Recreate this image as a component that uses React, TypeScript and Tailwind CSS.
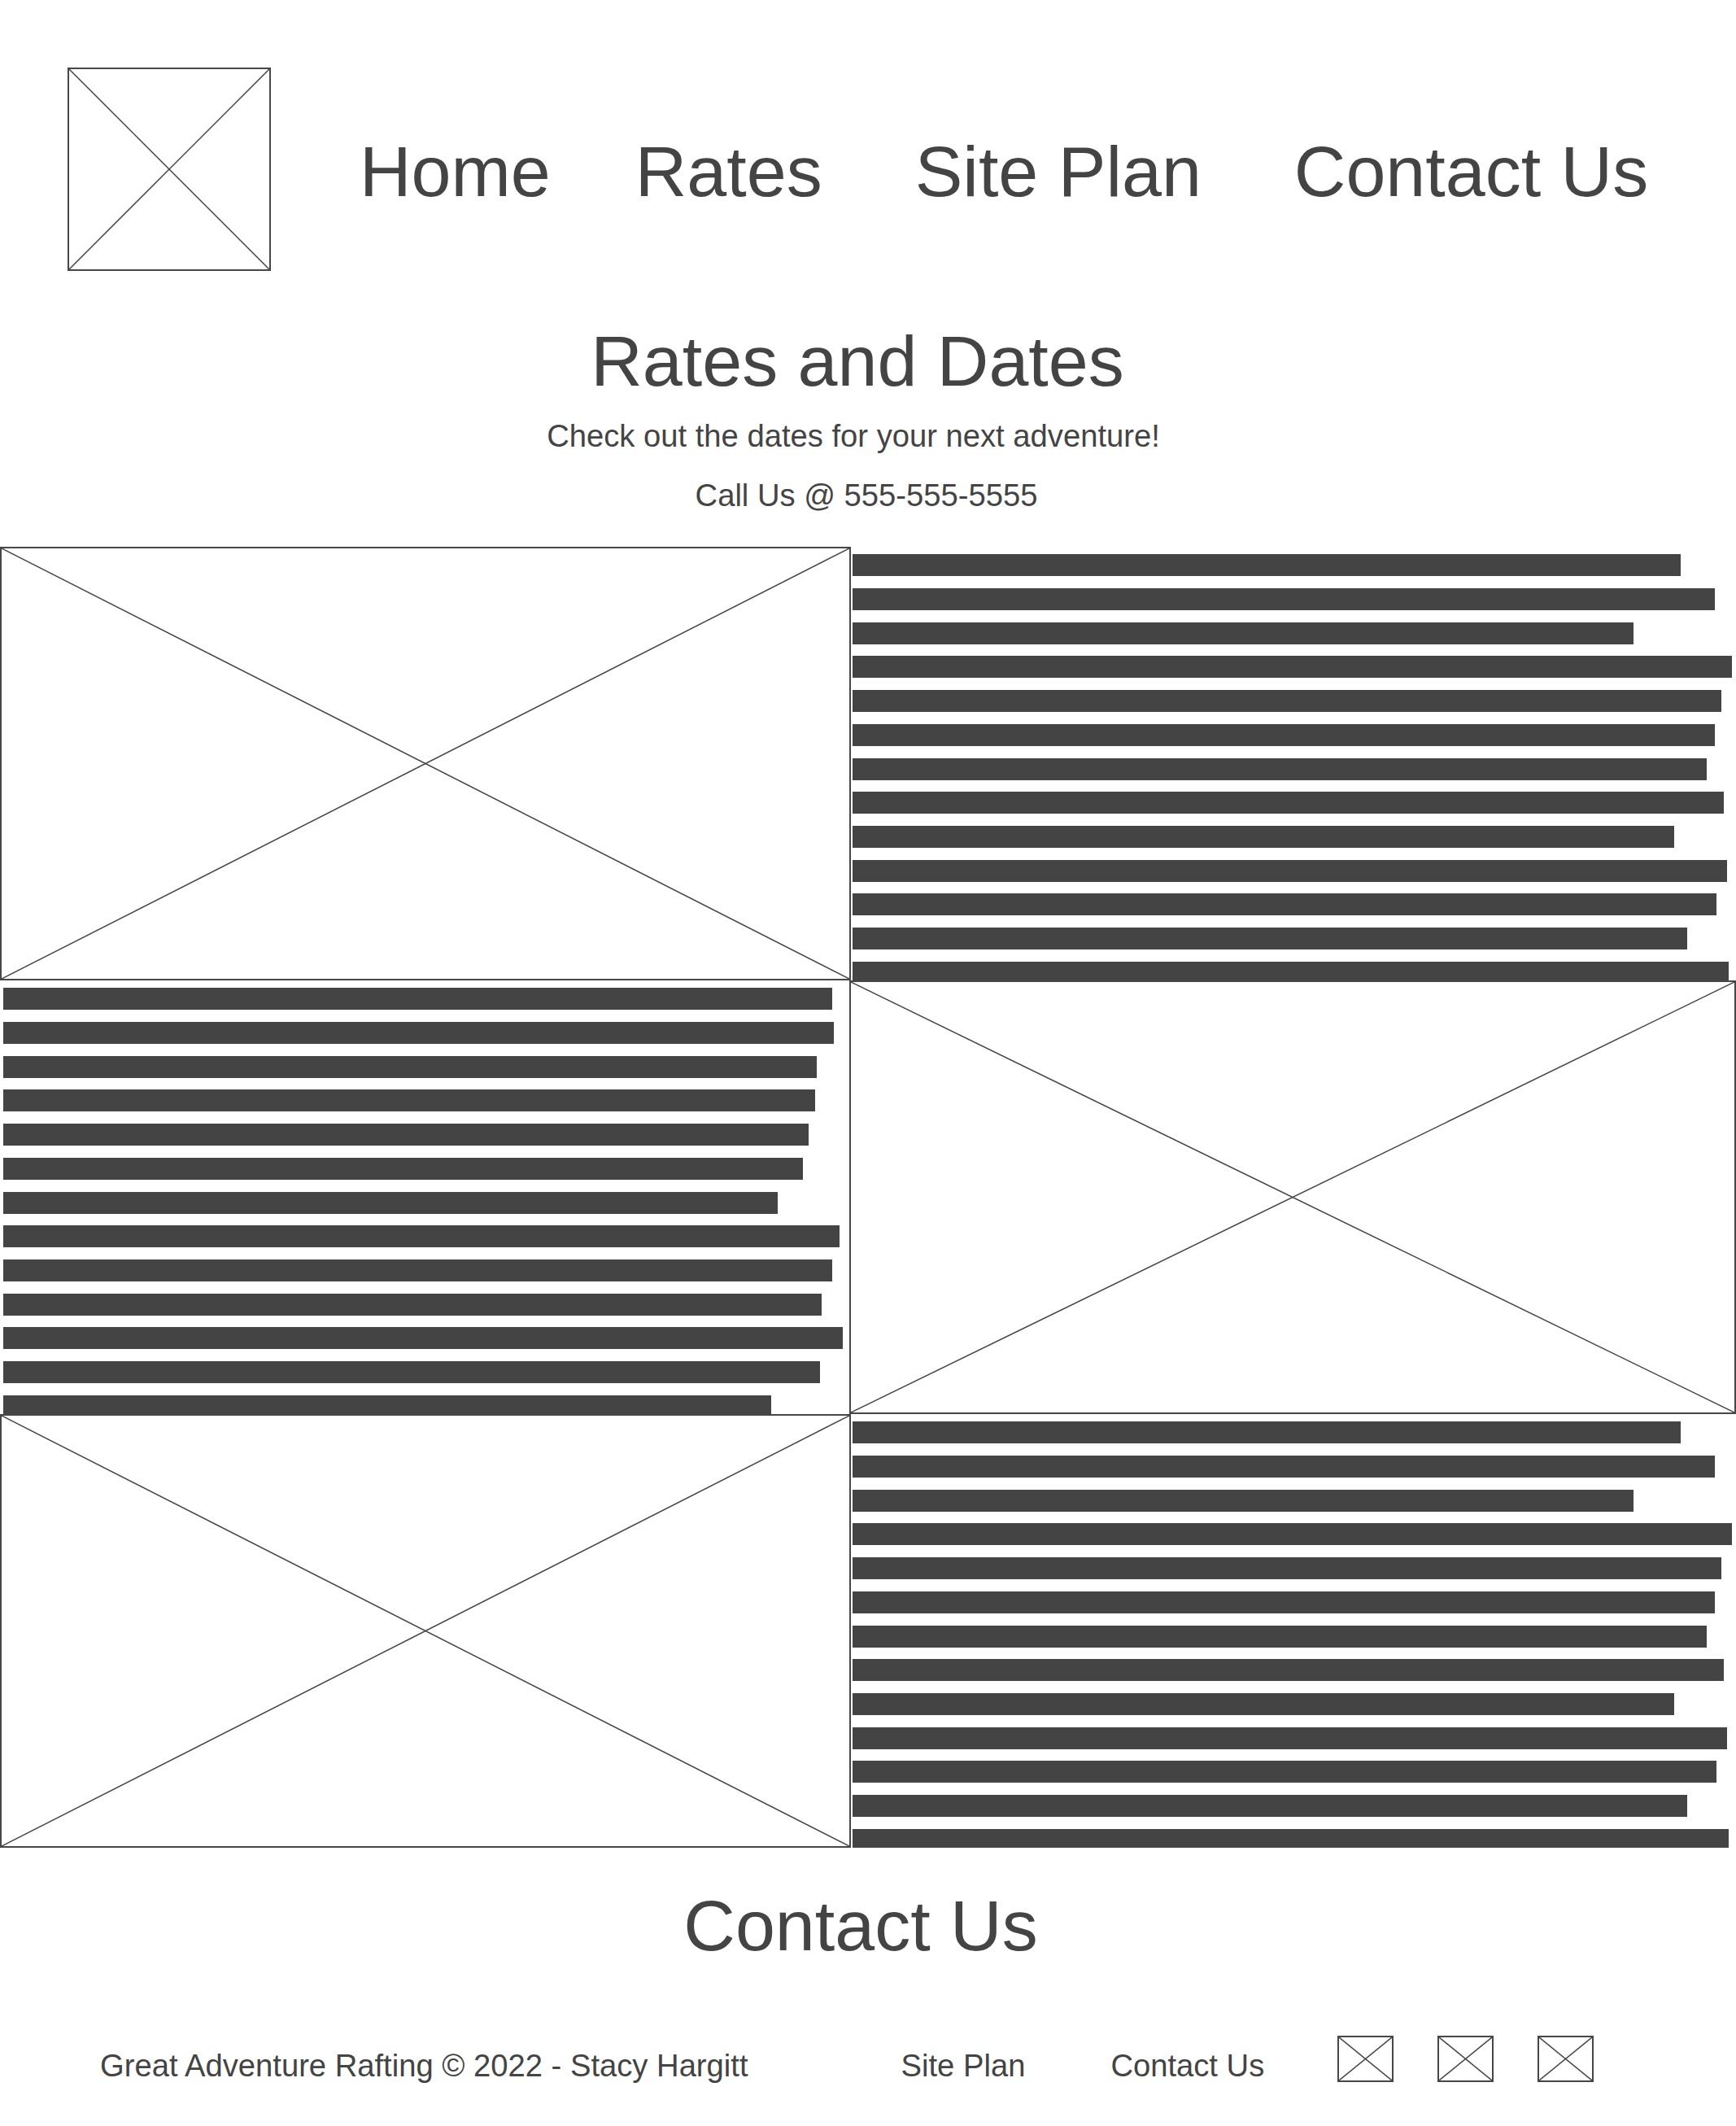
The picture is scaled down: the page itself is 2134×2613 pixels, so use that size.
import React from 'react';

const rightBars = [1018, 1060, 960, 1081, 1068, 1060, 1050, 1071, 1010, 1075, 1062, 1026, 1077];
const leftBars = [1019, 1021, 1000, 998, 990, 983, 952, 1028, 1019, 1006, 1032, 1004, 944];

const Placeholder: React.FC<{ className?: string; stroke?: number }> = ({ className = '', stroke = 1.5 }) => (
  <div className={`relative border-2 border-[#474747] bg-white ${className}`}>
    <svg className="absolute inset-0 h-full w-full" viewBox="0 0 100 100" preserveAspectRatio="none">
      <line x1="0" y1="0" x2="100" y2="100" stroke="#444" strokeWidth={stroke} vectorEffect="non-scaling-stroke" />
      <line x1="100" y1="0" x2="0" y2="100" stroke="#444" strokeWidth={stroke} vectorEffect="non-scaling-stroke" />
    </svg>
  </div>
);

const TextBlock: React.FC<{ widths: number[]; className?: string }> = ({ widths, className = '' }) => (
  <div className={`h-[533px] overflow-hidden pt-[9px] flex flex-col gap-[14.7px] ${className}`}>
    {widths.map((w, i) => (
      <div key={i} className="h-[27px] shrink-0 bg-[#444]" style={{ width: w }} />
    ))}
  </div>
);

export default function App() {
  return (
    <div className="w-[2134px] min-h-[2613px] bg-white text-[#444] font-['Liberation_Sans',Arial,sans-serif] pb-[53px]">
      {/* header */}
      <header className="flex items-center pt-[83px] pl-[83px]">
        <Placeholder className="h-[250px] w-[250px]" />
        <nav className="flex items-center pt-[6px] text-[88px] leading-none">
          <a className="ml-[109px]">Home</a>
          <a className="ml-[104px]">Rates</a>
          <a className="ml-[114px]">Site Plan</a>
          <a className="ml-[114px]">Contact Us</a>
        </nav>
      </header>

      {/* intro */}
      <section className="flex flex-col items-center">
        <h1 className="mt-[67px] pr-[26px] text-[88px] leading-none font-normal">Rates and Dates</h1>
        <p className="mt-[29px] pr-[36px] text-[38.2px] leading-none">Check out the dates for your next adventure!</p>
        <p className="mt-[35px] pr-[4px] text-[38.2px] leading-none">Call Us @ 555-555-5555</p>
      </section>

      {/* rates grid */}
      <section className="mt-[44px] grid grid-cols-[1046px_1fr]">
        <Placeholder className="h-[533px] w-full" />
        <TextBlock widths={rightBars} className="pl-[2px]" />

        <TextBlock widths={leftBars} className="pl-[4px]" />
        <Placeholder className="h-[533px] -ml-[2px]" />

        <Placeholder className="h-[533px] w-full" />
        <TextBlock widths={rightBars} className="pl-[2px]" />
      </section>

      {/* contact */}
      <section className="flex flex-col items-center">
        <h2 className="mt-[52px] pr-[18px] text-[88px] leading-none font-normal">Contact Us</h2>
      </section>

      {/* footer */}
      <footer className="mt-[91px] flex items-start pl-[123px] text-[38.2px] leading-none">
        <span className="mt-[18px]">Great Adventure Rafting © 2022 - Stacy Hargitt</span>
        <a className="mt-[18px] ml-[188px]">Site Plan</a>
        <a className="mt-[18px] ml-[105px]">Contact Us</a>
        <div className="ml-[90px] flex gap-[54px]">
          <Placeholder className="h-[57px] w-[69px]" />
          <Placeholder className="h-[57px] w-[69px]" />
          <Placeholder className="h-[57px] w-[69px]" />
        </div>
      </footer>
    </div>
  );
}
